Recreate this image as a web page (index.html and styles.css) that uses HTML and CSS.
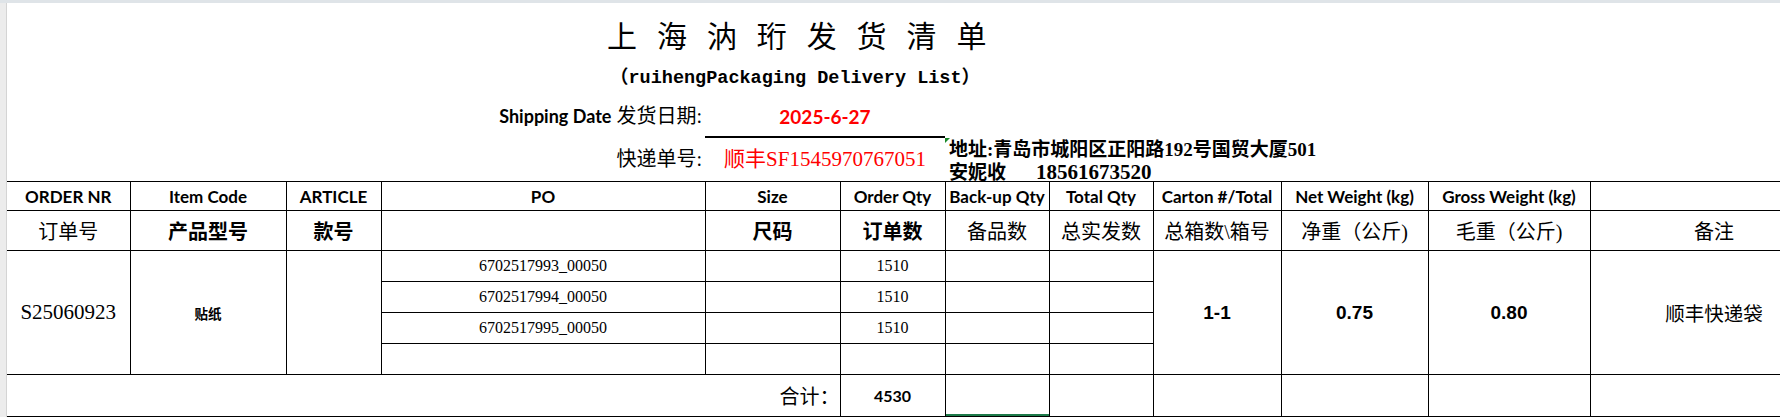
FILE: index.html
```html
<!DOCTYPE html>
<html lang="zh-CN">
<head>
    <meta charset="UTF-8">
    <meta name="viewport" content="width=device-width, initial-scale=1.0">
    <title>上海汭珩发货清单</title>
    <link rel="stylesheet" href="styles.css">
</head>
<body>
    <div class="topbar"></div>
    <div class="sheet">
        <div class="gutter"></div>
        <div class="content">
            <div class="title">上 海 汭 珩 发 货 清 单</div>
            <div class="subtitle">（ruihengPackaging Delivery List）</div>

            <div class="info ship-row">
                <div class="label"><span class="en">Shipping Date</span> 发货日期:</div>
                <div class="date">2025-6-27</div>
            </div>

            <div class="info track-row">
                <div class="label">快递单号:</div>
                <div class="tracking">顺丰SF1545970767051</div>
                <div class="address">
                    <div>地址:青岛市城阳区正阳路192号国贸大厦501</div>
                    <div>安妮收<span class="phone">18561673520</span></div>
                </div>
            </div>

            <table class="list">
                <colgroup>
                    <col class="c1"><col class="c2"><col class="c3"><col class="c4">
                    <col class="c5"><col class="c6"><col class="c7"><col class="c8">
                    <col class="c9"><col class="c10"><col class="c11"><col class="c12">
                </colgroup>
                <tr class="head-en">
                    <th class="first">ORDER NR</th>
                    <th>Item Code</th>
                    <th>ARTICLE</th>
                    <th>PO</th>
                    <th>Size</th>
                    <th>Order Qty</th>
                    <th>Back-up Qty</th>
                    <th>Total Qty</th>
                    <th>Carton #/Total</th>
                    <th>Net Weight (kg)</th>
                    <th>Gross Weight (kg)</th>
                    <th></th>
                </tr>
                <tr class="head-cn">
                    <th class="first">订单号</th>
                    <th class="b">产品型号</th>
                    <th class="b">款号</th>
                    <th></th>
                    <th class="b">尺码</th>
                    <th class="b">订单数</th>
                    <th>备品数</th>
                    <th>总实发数</th>
                    <th>总箱数\箱号</th>
                    <th>净重（公斤)</th>
                    <th>毛重（公斤)</th>
                    <th>备注</th>
                </tr>
                <tr class="line">
                    <td class="first order" rowspan="4">S25060923</td>
                    <td class="item" rowspan="4">贴纸</td>
                    <td rowspan="4"></td>
                    <td class="num">6702517993_00050</td>
                    <td></td>
                    <td class="num">1510</td>
                    <td></td>
                    <td></td>
                    <td class="big" rowspan="4">1-1</td>
                    <td class="big" rowspan="4">0.75</td>
                    <td class="big" rowspan="4">0.80</td>
                    <td class="remark" rowspan="4">顺丰快递袋</td>
                </tr>
                <tr class="line">
                    <td class="num">6702517994_00050</td>
                    <td></td>
                    <td class="num">1510</td>
                    <td></td>
                    <td></td>
                </tr>
                <tr class="line">
                    <td class="num">6702517995_00050</td>
                    <td></td>
                    <td class="num">1510</td>
                    <td></td>
                    <td></td>
                </tr>
                <tr class="line">
                    <td></td>
                    <td></td>
                    <td></td>
                    <td></td>
                    <td></td>
                </tr>
                <tr class="total">
                    <td class="first sum-label" colspan="5">合计：</td>
                    <td class="sum">4530</td>
                    <td class="selected"></td>
                    <td></td>
                    <td></td>
                    <td></td>
                    <td></td>
                    <td></td>
                </tr>
            </table>
        </div>
    </div>
</body>
</html>
```

FILE: styles.css
```css
body {
    margin: 0;
    background: #ffffff;
    color: #000000;
    font-family: "Liberation Serif", "Noto Sans CJK SC", serif;
    overflow: hidden;
}

.topbar {
    height: 3px;
    background: #dfe4e8;
}

.sheet {
    display: flex;
    height: 414px;
}

.gutter {
    flex: none;
    width: 6px;
    background: #ececec;
    border-right: 1px solid #d4d4d4;
}

.content {
    flex: 1;
    min-width: 0;
    overflow: hidden;
}

/* heading block */

.title {
    height: 57px;
    box-sizing: border-box;
    padding: 6px 0 0 600px;
    font-family: "Noto Sans CJK SC", sans-serif;
    font-size: 30px;
    line-height: 51px;
    letter-spacing: 6.6px;
    white-space: nowrap;
}

.subtitle {
    height: 37px;
    padding-left: 603px;
    font-family: "Liberation Mono", "Noto Sans CJK SC", monospace;
    font-weight: bold;
    font-size: 18.5px;
    line-height: 37px;
    white-space: nowrap;
}

.info {
    display: grid;
    grid-template-columns: 698px 240px 1fr;
}

.label {
    text-align: right;
    padding-right: 3px;
    font-size: 20px;
    white-space: nowrap;
}

.en {
    font-family: Lato, sans-serif;
    font-weight: bold;
    font-size: 18px;
}

.ship-row .label {
    line-height: 39px;
}

.date {
    height: 39px;
    line-height: 39px;
    text-align: center;
    color: #ff0000;
    font-family: Lato, sans-serif;
    font-weight: bold;
    font-size: 19px;
    border-bottom: 2px solid #000000;
}

.track-row {
    height: 43px;
}

.track-row .label,
.tracking {
    line-height: 43px;
}

.tracking {
    text-align: center;
    color: #ff0000;
    font-size: 21px;
    white-space: nowrap;
}

.address {
    position: relative;
    padding: 1px 0 0 4px;
    font-weight: bold;
    font-size: 19px;
    line-height: 22px;
    white-space: nowrap;
}

.address::before {
    content: "";
    position: absolute;
    left: 0;
    top: 0;
    border-top: 5px solid #1a8a2a;
    border-right: 5px solid transparent;
}

.phone {
    margin-left: 30px;
    font-size: 21px;
}

/* delivery table */

.list {
    border-collapse: collapse;
    table-layout: fixed;
    width: 1831px;
}

.c1 { width: 123px; }
.c2 { width: 156px; }
.c3 { width: 95px; }
.c4 { width: 324px; }
.c5 { width: 135px; }
.c6 { width: 105px; }
.c7 { width: 104px; }
.c8 { width: 104px; }
.c9 { width: 128px; }
.c10 { width: 147px; }
.c11 { width: 162px; }
.c12 { width: 248px; }

.list th,
.list td {
    border: 1px solid #000000;
    padding: 0;
    text-align: center;
    white-space: nowrap;
    overflow: hidden;
}

.list .first {
    border-left: none;
}

.head-en th {
    height: 28px;
    font-family: Lato, sans-serif;
    font-weight: bold;
    font-size: 17px;
}

.head-cn th {
    height: 39px;
    font-weight: normal;
    font-size: 20px;
}

.head-cn th.b {
    font-weight: bold;
}

.line td {
    height: 30px;
}

.order {
    font-size: 21px;
}

.item {
    font-weight: bold;
    font-size: 13.5px;
}

.num {
    font-size: 16px;
}

.big {
    font-family: "Liberation Sans", sans-serif;
    font-weight: bold;
    font-size: 19px;
}

.remark {
    font-size: 19.5px;
}

.total td {
    height: 41px;
}

.list .sum-label {
    text-align: right;
    padding-right: 0;
    font-size: 20px;
}

.sum {
    font-family: Lato, sans-serif;
    font-weight: bold;
    font-size: 16px;
}

.selected {
    box-shadow: inset 0 -2px 0 #1e7b4a;
}
```
